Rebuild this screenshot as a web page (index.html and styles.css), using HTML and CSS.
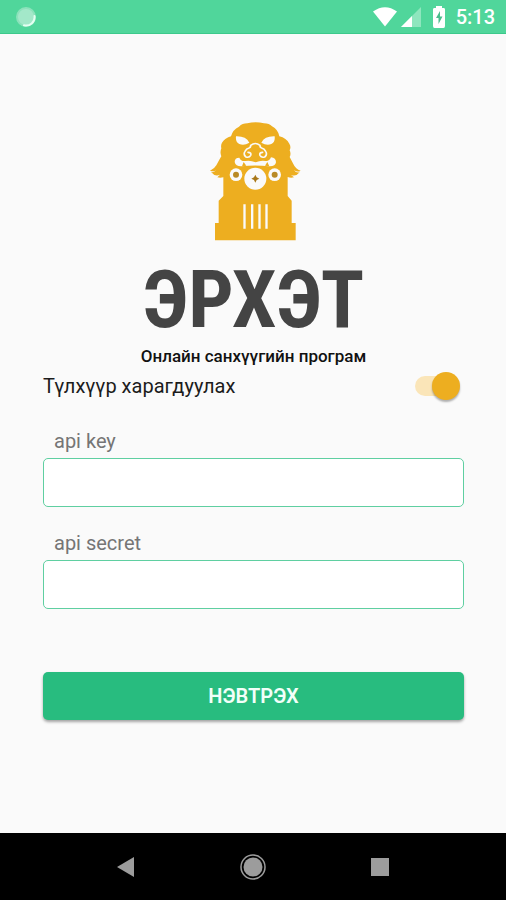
FILE: index.html
```html
<!DOCTYPE html>
<html lang="mn">
<head>
<meta charset="utf-8">
<meta name="viewport" content="width=device-width, initial-scale=1">
<title>ЭРХЭТ</title>
<link rel="stylesheet" href="styles.css">
</head>
<body>
<header class="status">
  <svg class="status-sync" viewBox="0 0 20 20" aria-hidden="true">
    <circle cx="10" cy="10" r="9" fill="#a3e8c9"/>
    <circle cx="10" cy="10" r="9" fill="none" stroke="#8ce2bb" stroke-width="2"/>
    <path d="M18.500 9A8.500 8.500 0 0 1 8 18.300" fill="none" stroke="#e4fff2" stroke-width="2" stroke-linecap="round"/>
  </svg>
  <div class="status-icons">
    <svg class="wifi" viewBox="0 0 26 20" aria-hidden="true"><path d="M1 4.500Q13-4 25 4.500L13 19.500Z" fill="#fff"/></svg>
    <svg class="signal" viewBox="0 0 20 20" aria-hidden="true"><path d="M0 20L20 0V20Z" fill="#8ee6be"/><path d="M0 20L11 9V20Z" fill="#fff"/></svg>
    <svg class="battery" viewBox="0 0 14 22" aria-hidden="true"><path d="M4 0H10V2H12Q13 2 13 3.500V20Q13 22 11.500 22H2.500Q1 22 1 20V3.500Q1 2 2 2H4Z" fill="#fff"/><path d="M8 5L4 12H6.500V18L10.500 10.500H8Z" fill="#4bbd8d"/></svg>
    <span class="clock">5:13</span>
  </div>
</header>

<main class="login">
  <div class="brand">
    <svg class="brand-lion" viewBox="24 30 300 366" aria-hidden="true">
      <path fill="#edae20" d="M57 391V339H68V272L82 258V202Q73 204 64 202L72 194Q57 201 45 186Q54 188 61 181Q53 186 42 182Q55 177 61 166Q70 149 76 139Q71 127 76 115Q72 99 88 87Q97 81 105 79Q110 59 129 50Q139 40 154 40Q179 33 204 40Q220 40 228 49Q246 58 250 79Q271 84 280 101Q286 110 281 121Q286 132 281 141L292 162Q299 178 314 182Q304 188 294 180Q300 190 311 187Q299 202 284 194L294 202Q284 205 275 201V258L287 272V339H299V391Z"/>
      <g fill="#fafafa">
        <path d="M120 79Q150 78 160 98Q144 108 130 102Q118 96 120 79ZM236 79Q206 78 196 98Q212 108 226 102Q238 96 236 79Z"/>
        <path d="M130 143Q116 143 116 156Q119 169 135 169Q178 164 219 169Q238 170 240 157Q240 143 225 142Q219 155 209 153Q194 150 179 157Q163 150 148 153Q135 155 130 143Z"/>
        <circle cx="120" cy="194" r="19"/><circle cx="236" cy="194" r="19"/>
        <circle cx="178" cy="206" r="33"/>
        <path d="M142 283H149V356H142ZM165 283H172V356H165ZM187 283H194V356H187ZM208 283H215V356H208Z"/>
      </g>
      <path d="M156 127Q167 127 164 136Q160 144 150 141Q141 134 147 124Q151 116 159 114Q165 112 164 106Q178 95 192 106Q191 112 197 114Q205 116 209 124Q215 134 206 141Q196 144 192 136Q189 127 200 127" fill="none" stroke="#fafafa" stroke-width="5" stroke-linecap="round"/>
      <path d="M138 169L143 156L151 167ZM207 167L214 156L220 169Z" fill="#edae20"/>
      <circle cx="120" cy="194" r="9" fill="#b98a25"/><circle cx="236" cy="194" r="9" fill="#b98a25"/>
      <path d="M178 194L182 202L190 206L182 210L178 218L174 210L166 206L174 202Z" fill="#a87718"/>
    </svg>
    <h1 class="brand-name">ЭРХЭТ</h1>
    <p class="brand-tagline">Онлайн санхүүгийн програм</p>
  </div>

  <form class="form">
    <div class="toggle-row">
      <label for="show-key">Түлхүүр харагдуулах</label>
      <input class="switch" id="show-key" type="checkbox" role="switch" checked>
    </div>
    <div class="field">
      <label for="api-key">api key</label>
      <input id="api-key" type="text">
    </div>
    <div class="field">
      <label for="api-secret">api secret</label>
      <input id="api-secret" type="text">
    </div>
    <button class="submit" type="button">НЭВТРЭХ</button>
  </form>
</main>

<nav class="navbar">
  <button type="button" aria-label="Back"><svg viewBox="0 0 28 28"><path d="M5 14L22 4V24Z" fill="#9c9c9c"/></svg></button>
  <button type="button" aria-label="Home"><svg viewBox="0 0 28 28"><circle cx="14" cy="14" r="12" fill="none" stroke="#9c9c9c" stroke-width="1.500"/><circle cx="14" cy="14" r="9.500" fill="#9c9c9c"/></svg></button>
  <button type="button" aria-label="Recents"><svg viewBox="0 0 28 28"><path d="M5 5H23V23H5Z" fill="#9c9c9c"/></svg></button>
</nav>
</body>
</html>
```

FILE: styles.css
```css
* {
  box-sizing: border-box;
}

body {
  margin: 0;
  min-height: 100vh;
  display: flex;
  flex-direction: column;
  background: #fafafa;
  color: #1c1c1c;
  font-family: Roboto, "Noto Sans", sans-serif;
  font-size: 20px;
  line-height: 24px;
}

.status {
  display: flex;
  align-items: center;
  justify-content: space-between;
  height: 34px;
  padding: 0 11px 0 16px;
  background: #50d69b;
  border-bottom: 1px solid #3cc98b;
  color: #fff;
}

.status-sync {
  width: 20px;
  height: 20px;
}

.status-icons {
  display: flex;
  align-items: center;
}

.wifi {
  width: 26px;
  height: 20px;
  margin-right: 3px;
}

.signal {
  width: 20px;
  height: 20px;
  margin-right: 11px;
}

.battery {
  width: 14px;
  height: 22px;
  margin-right: 10px;
}

.clock {
  font-weight: 500;
}

.login {
  flex: 1;
  padding: 86px 42px 24px 43px;
}

.brand {
  display: flex;
  flex-direction: column;
  align-items: center;
}

.brand-lion {
  width: 100px;
  height: 122px;
}

.brand-name {
  margin: 16px 0 0;
  color: #444;
  font-family: "Liberation Sans Narrow", "Roboto Condensed", Roboto, sans-serif;
  font-size: 80px;
  font-weight: 700;
  line-height: 84px;
}

.brand-tagline {
  margin: 4px 0 0;
  color: #111;
  font-size: 17px;
  font-weight: 500;
  line-height: 20px;
}

.toggle-row {
  display: flex;
  align-items: center;
  justify-content: space-between;
  height: 39px;
  padding-right: 4px;
}

.switch {
  appearance: none;
  position: relative;
  width: 45px;
  height: 28px;
  margin: 0;
}

.switch::before {
  content: "";
  position: absolute;
  inset: 4px 6px 4px 0;
  border-radius: 10px;
  background: #fae5b8;
}

.switch::after {
  content: "";
  position: absolute;
  top: 0;
  right: 0;
  width: 28px;
  height: 28px;
  border-radius: 50%;
  background: #edae20;
  box-shadow: 0 2px 2px rgba(0, 0, 0, 0.3);
}

.field {
  display: flex;
  flex-direction: column;
  margin-top: 24px;
}

.field label {
  padding-left: 11px;
  margin-bottom: 5px;
  color: #757575;
}

.field input {
  width: 100%;
  height: 49px;
  padding: 0 12px;
  border: 1px solid #5fcfa1;
  border-radius: 5px;
  background: #fff;
  font: inherit;
}

.submit {
  display: block;
  width: 100%;
  height: 48px;
  margin-top: 63px;
  border: 0;
  border-radius: 5px;
  background: #28bc7f;
  box-shadow: 0 2px 3px rgba(0, 0, 0, 0.35);
  color: #f2fff9;
  font: inherit;
  font-weight: 600;
}

.navbar {
  display: flex;
  align-items: center;
  justify-content: center;
  gap: 99px;
  height: 67px;
  background: #000;
}

.navbar button {
  display: flex;
  padding: 0;
  border: 0;
  background: none;
}

.navbar svg {
  width: 28px;
  height: 28px;
}
```
